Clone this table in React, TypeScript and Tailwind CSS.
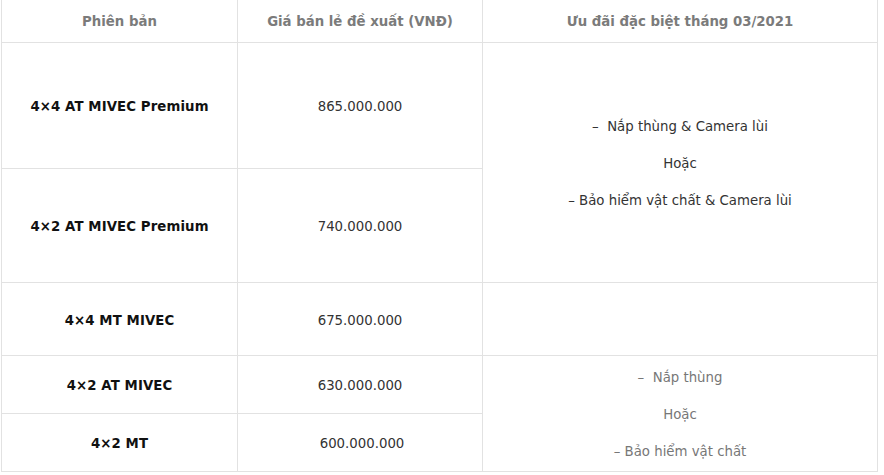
const rows = [
  { name: "4×4 AT MIVEC Premium", price: "865.000.000", h: "h-[126px]" },
  { name: "4×2 AT MIVEC Premium", price: "740.000.000", h: "h-[114px]" },
  { name: "4×4 MT MIVEC", price: "675.000.000", h: "h-[73px]" },
  { name: "4×2 AT MIVEC", price: "630.000.000", h: "h-[58px]" },
  { name: "4×2 MT", price: "600.000.000", h: "h-[58px]" },
]

function Offer({ lines, tone }: { lines: string[]; tone: string }) {
  return (
    <div className={`flex flex-col items-center gap-[17px] ${tone}`}>
      {lines.map((l) => (
        <p key={l} className="leading-[20px] whitespace-pre">
          {l}
        </p>
      ))}
    </div>
  )
}

export default function App() {
  return (
    <main className="min-h-screen bg-white pl-px font-['DejaVu_Sans','Verdana',sans-serif] text-[13.3px]">
      <table className="w-[877px] table-fixed border-collapse">
        <colgroup>
          <col className="w-[236px]" />
          <col className="w-[245px]" />
          <col />
        </colgroup>
        <thead>
          <tr className="h-[42px]">
            <th className="border border-t-0 border-[#e2e2e2] pt-[2px] font-bold text-[#7b7b7b] text-center">Phiên bản</th>
            <th className="border border-t-0 border-[#e2e2e2] pt-[2px] font-bold text-[#7b7b7b] text-center">Giá bán lẻ đề xuất (VNĐ)</th>
            <th className="border border-t-0 border-[#e2e2e2] pt-[2px] font-bold text-[#7b7b7b] text-center">Ưu đãi đặc biệt tháng 03/2021</th>
          </tr>
        </thead>
        <tbody>
          {rows.map((r, i) => (
            <tr key={r.name} className={r.h}>
              <td className="border border-[#e2e2e2] pt-1 text-center font-bold text-[#111] tracking-[0.1px]">{r.name}</td>
              <td className={`border border-[#e2e2e2] pt-1 text-center text-[#333] ${i === 4 ? "pl-[4px]" : ""}`}>{r.price}</td>
              {i === 0 && (
                <td rowSpan={2} className="border border-[#e2e2e2] pt-1 text-center">
                  <Offer
                    tone="text-[#333]"
                    lines={["–  Nắp thùng & Camera lùi", "Hoặc", "– Bảo hiểm vật chất & Camera lùi"]}
                  />
                </td>
              )}
              {i === 2 && <td className="border border-[#e2e2e2]" />}
              {i === 3 && (
                <td rowSpan={2} className="border border-[#e2e2e2] pt-1 text-center">
                  <Offer tone="text-[#777]" lines={["–  Nắp thùng", "Hoặc", "– Bảo hiểm vật chất"]} />
                </td>
              )}
            </tr>
          ))}
        </tbody>
      </table>
    </main>
  )
}
